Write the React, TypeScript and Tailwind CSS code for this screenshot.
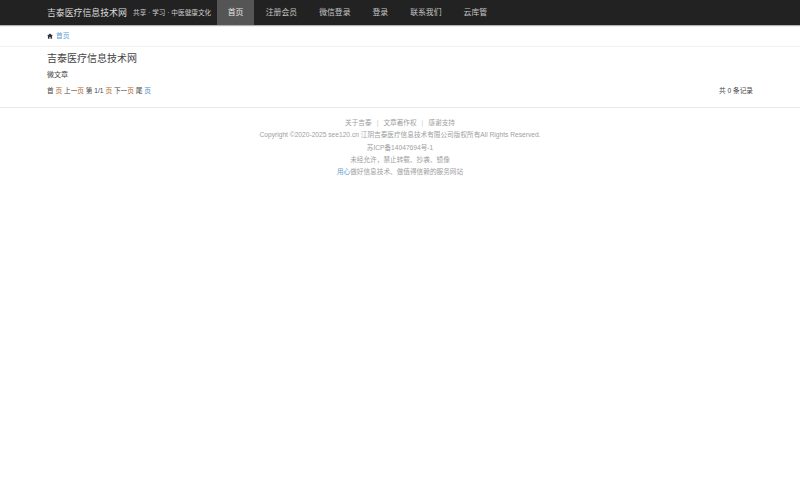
const cjk = "font-['Liberation_Sans','Noto_Sans_CJK_SC',sans-serif]";

const navItems = ["首页", "注册会员", "微信登录", "登录", "联系我们", "云库管"];

export default function App() {
  return (
    <div className={`${cjk} min-h-[500px] bg-white text-[6.65px] leading-[10px] text-[#444]`}>
      <nav className="flex h-[25px] items-stretch bg-[#222] pl-[47px] shadow-[0_1px_1px_rgba(0,0,0,0.3)]">
        <span className="flex w-[80px] items-center text-[8.9px] whitespace-nowrap text-[#ddd]">吉泰医疗信息技术网</span>
        <span className="ml-[6px] flex w-[78px] items-center whitespace-nowrap text-[#ccc]">共享 · 学习 · 中医健康文化</span>
        <ul className="ml-[6px] flex text-[7.85px] whitespace-nowrap text-[#c4c4c4]">
          {navItems.map((item, i) => (
            <li key={item} className={`flex items-center ${i === 0 ? "mr-[0.7px] bg-[#555] px-[10.7px] text-[#e6e6e6]" : "px-[11px]"}`}>
              {item}
            </li>
          ))}
        </ul>
      </nav>
      <div className="flex h-[22px] items-center gap-[3px] border-b border-[#f0f0f0] pl-[47px]">
        <svg viewBox="0 0 16 16" className="h-[6px] w-[6px] fill-[#333]">
          <path d="M8 1 0 8h2.5v7h4v-4.5h3V15h4V8H16z" />
        </svg>
        <span className="text-[#5a9bd5]">首页</span>
      </div>
      <main className="border-b border-[#e8e8e8] px-[47px] pt-[5px]">
        <h1 className="text-[10px] leading-[14px] font-normal text-[#444]">吉泰医疗信息技术网</h1>
        <p className="mt-[4px] text-[7px]">微文章</p>
        <div className="mt-[6px] flex h-[21px] justify-between">
          <span>
            首 <span className="text-[#b5651d]">页</span> 上一<span className="text-[#b5651d]">页</span> 第 1/1 <span className="text-[#b5651d]">页</span> 下一<span className="text-[#b5651d]">页</span> 尾 <span className="text-[#428bca]">页</span>
          </span>
          <span>共 0 条记录</span>
        </div>
      </main>
      <footer className="flex flex-col items-center pt-[9px] leading-[12.25px] text-[#a0a0a0]">
        <div className="flex gap-[5px]">
          <span>关于吉泰</span>
          <span className="text-[#ccc]">|</span>
          <span>文章著作权</span>
          <span className="text-[#ccc]">|</span>
          <span>感谢支持</span>
        </div>
        <p>Copyright ©2020-2025 see120.cn 江阴吉泰医疗信息技术有限公司版权所有All Rights Reserved.</p>
        <p>苏ICP备14047694号-1</p>
        <p>未经允许，禁止转载、抄袭、镜像</p>
        <p><span className="text-[#6a9fd0]">用心</span>做好信息技术、做值得信赖的服务网站</p>
      </footer>
    </div>
  );
}
